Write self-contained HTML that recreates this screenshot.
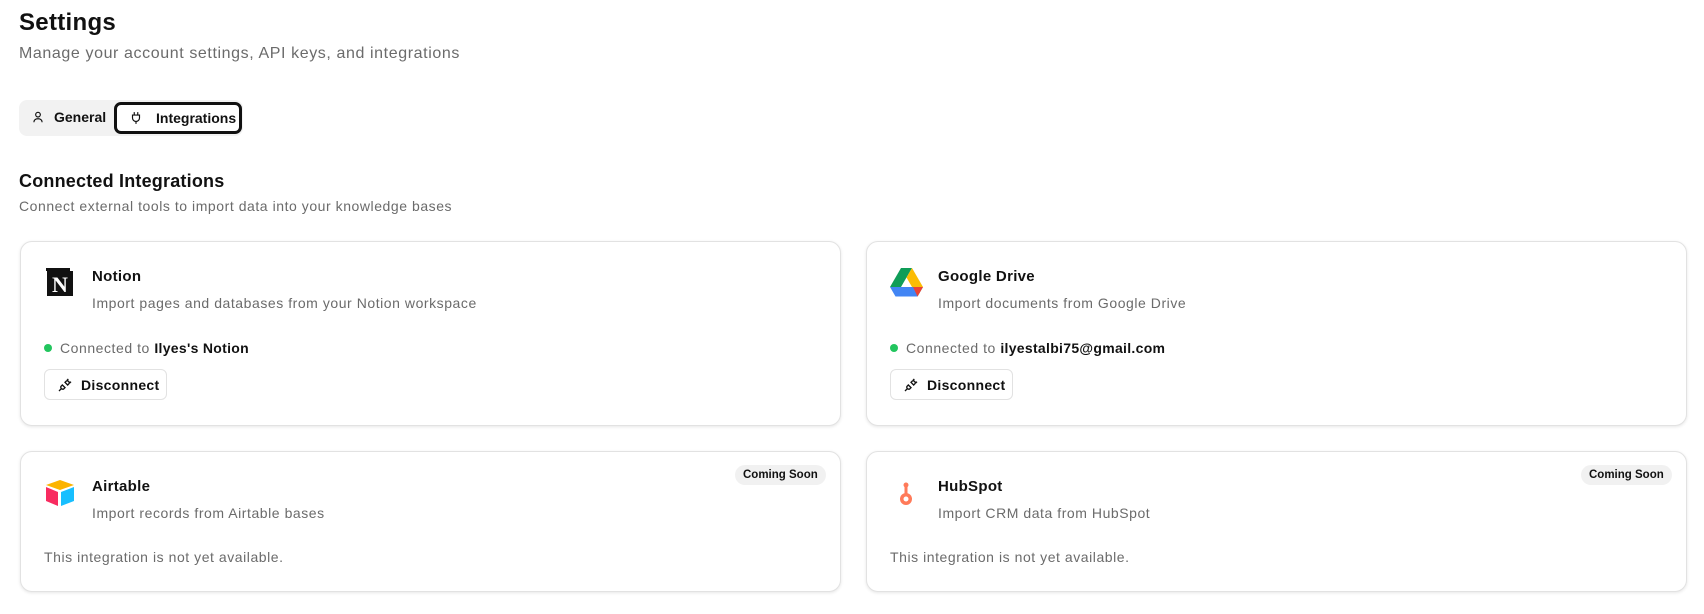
<!DOCTYPE html>
<html><head><meta charset="utf-8"><style>
*{box-sizing:border-box;margin:0;padding:0}
body{width:1704px;height:614px;background:#fff;font-family:"Liberation Sans",sans-serif;color:#111;position:relative;overflow:hidden}
.a{position:absolute;white-space:nowrap}
.card{position:absolute;border:1px solid #e2e2e2;border-radius:12px;box-shadow:0 1px 3px rgba(0,0,0,.1);background:#fff}
.t{font-size:15px;font-weight:bold;letter-spacing:.3px}
.d{font-size:14px;color:#6b6b6b;letter-spacing:.55px}
.btn{position:absolute;border:1px solid #e2e2e2;border-radius:6px;height:31px;font-size:14px;font-weight:bold;display:flex;align-items:center;padding-left:12px;gap:8px;letter-spacing:.3px}
.badge{position:absolute;background:#f1f1f1;border-radius:10px;font-size:11.5px;font-weight:bold;padding:4px 8px}
</style></head><body>
<div class="a" style="left:19px;top:9px;font-size:24px;font-weight:bold;letter-spacing:.3px">Settings</div>
<div class="a" style="left:19px;top:45px;font-size:16px;color:#6b6b6b;letter-spacing:.6px">Manage your account settings, API keys, and integrations</div>
<div class="a" style="left:19px;top:100px;width:224px;height:36px;background:#f2f2f2;border-radius:8px"></div>
<div class="a" style="left:31px;top:109px;font-size:14px;font-weight:bold;display:flex;align-items:center;gap:9px">
<svg width="14" height="14" viewBox="0 0 24 24" fill="none" stroke="#111" stroke-width="2"><circle cx="12" cy="8" r="4"/><path d="M5 21c0-4 3-6 7-6s7 2 7 6"/></svg>General</div>
<div class="a" style="left:114px;top:102px;width:128px;height:32px;border:3px solid #111;border-radius:7px;background:#fff;font-size:14px;font-weight:bold;display:flex;align-items:center;padding-left:12px;gap:13px">
<svg width="14" height="14" viewBox="0 0 24 24" fill="none" stroke="#111" stroke-width="2"><path d="M9 2v5M15 2v5M6 7h12v5a6 6 0 0 1-12 0zM12 18v4"/></svg>Integrations</div>
<div class="a" style="left:19px;top:171px;font-size:18px;font-weight:bold;letter-spacing:.2px">Connected Integrations</div>
<div class="a" style="left:19px;top:198px;font-size:14px;color:#6b6b6b;letter-spacing:.55px">Connect external tools to import data into your knowledge bases</div>

<div class="card" style="left:20px;top:241px;width:821px;height:185px"></div>
<svg class="a" style="left:46px;top:268px" width="29" height="29" viewBox="0 0 29 29"><rect x="1" y="3" width="26" height="25" fill="#111"/><rect x="0" y="0" width="24" height="3" fill="#111"/><text x="14" y="24" font-family="Liberation Serif" font-weight="bold" font-size="22" fill="#fff" text-anchor="middle">N</text></svg>
<div class="a t" style="left:92px;top:268px">Notion</div>
<div class="a d" style="left:92px;top:295px">Import pages and databases from your Notion workspace</div>
<div class="a" style="left:44px;top:344px;width:8px;height:8px;border-radius:50%;background:#22c55e"></div>
<div class="a d" style="left:60px;top:340px">Connected to <b style="color:#111;letter-spacing:.3px">Ilyes's Notion</b></div>
<div class="btn" style="left:44px;top:369px;width:123px"><svg width="16" height="16" viewBox="0 0 24 24" fill="none" stroke="#111" stroke-width="2"><path d="M3 21l4-4M17 3l-2 2M21 7l-2 2M8 12l4 4-2 2a3 3 0 0 1-4-4zM12 8l4 4 2-2a3 3 0 0 0-4-4z"/></svg>Disconnect</div>

<div class="card" style="left:866px;top:241px;width:821px;height:185px"></div>
<svg class="a" style="left:890px;top:268px" width="33" height="29" viewBox="0 0 33 29"><path d="M11 0h11L11 19H0z" fill="#0f9d58"/><path d="M22 0l11 19-5.5 9.5L16.5 9.5z" fill="#fbbc04"/><path d="M0 19h33l-5.5 9.5H5.5z" fill="#4285f4"/><path d="M27.5 28.5L33 19h-10z" fill="#ea4335"/></svg>
<div class="a t" style="left:938px;top:268px">Google Drive</div>
<div class="a d" style="left:938px;top:295px">Import documents from Google Drive</div>
<div class="a" style="left:890px;top:344px;width:8px;height:8px;border-radius:50%;background:#22c55e"></div>
<div class="a d" style="left:906px;top:340px">Connected to <b style="color:#111;letter-spacing:.3px">ilyestalbi75@gmail.com</b></div>
<div class="btn" style="left:890px;top:369px;width:123px"><svg width="16" height="16" viewBox="0 0 24 24" fill="none" stroke="#111" stroke-width="2"><path d="M3 21l4-4M17 3l-2 2M21 7l-2 2M8 12l4 4-2 2a3 3 0 0 1-4-4zM12 8l4 4 2-2a3 3 0 0 0-4-4z"/></svg>Disconnect</div>

<div class="card" style="left:20px;top:451px;width:821px;height:141px"></div>
<svg class="a" style="left:45px;top:480px" width="30" height="27" viewBox="0 0 30 27"><path d="M15 0l14 5-14 5L1 5z" fill="#fcb400"/><path d="M16 12l13-5v14l-13 5z" fill="#18bfff"/><path d="M1 7l12 5v14L1 21z" fill="#f82b60"/></svg>
<div class="a t" style="left:92px;top:478px">Airtable</div>
<div class="a d" style="left:92px;top:505px">Import records from Airtable bases</div>
<div class="a d" style="left:44px;top:549px">This integration is not yet available.</div>
<div class="badge" style="left:735px;top:465px">Coming Soon</div>

<div class="card" style="left:866px;top:451px;width:821px;height:141px"></div>
<svg class="a" style="left:898px;top:482px" width="16" height="24" viewBox="0 0 16 24"><circle cx="8" cy="17" r="6" fill="#ff7a59"/><rect x="6.5" y="4" width="3" height="8" fill="#ff7a59"/><circle cx="8" cy="3" r="2.5" fill="#ff7a59"/><circle cx="8" cy="17" r="2.5" fill="#fff"/></svg>
<div class="a t" style="left:938px;top:478px">HubSpot</div>
<div class="a d" style="left:938px;top:505px">Import CRM data from HubSpot</div>
<div class="a d" style="left:890px;top:549px">This integration is not yet available.</div>
<div class="badge" style="left:1581px;top:465px">Coming Soon</div>
</body></html>
